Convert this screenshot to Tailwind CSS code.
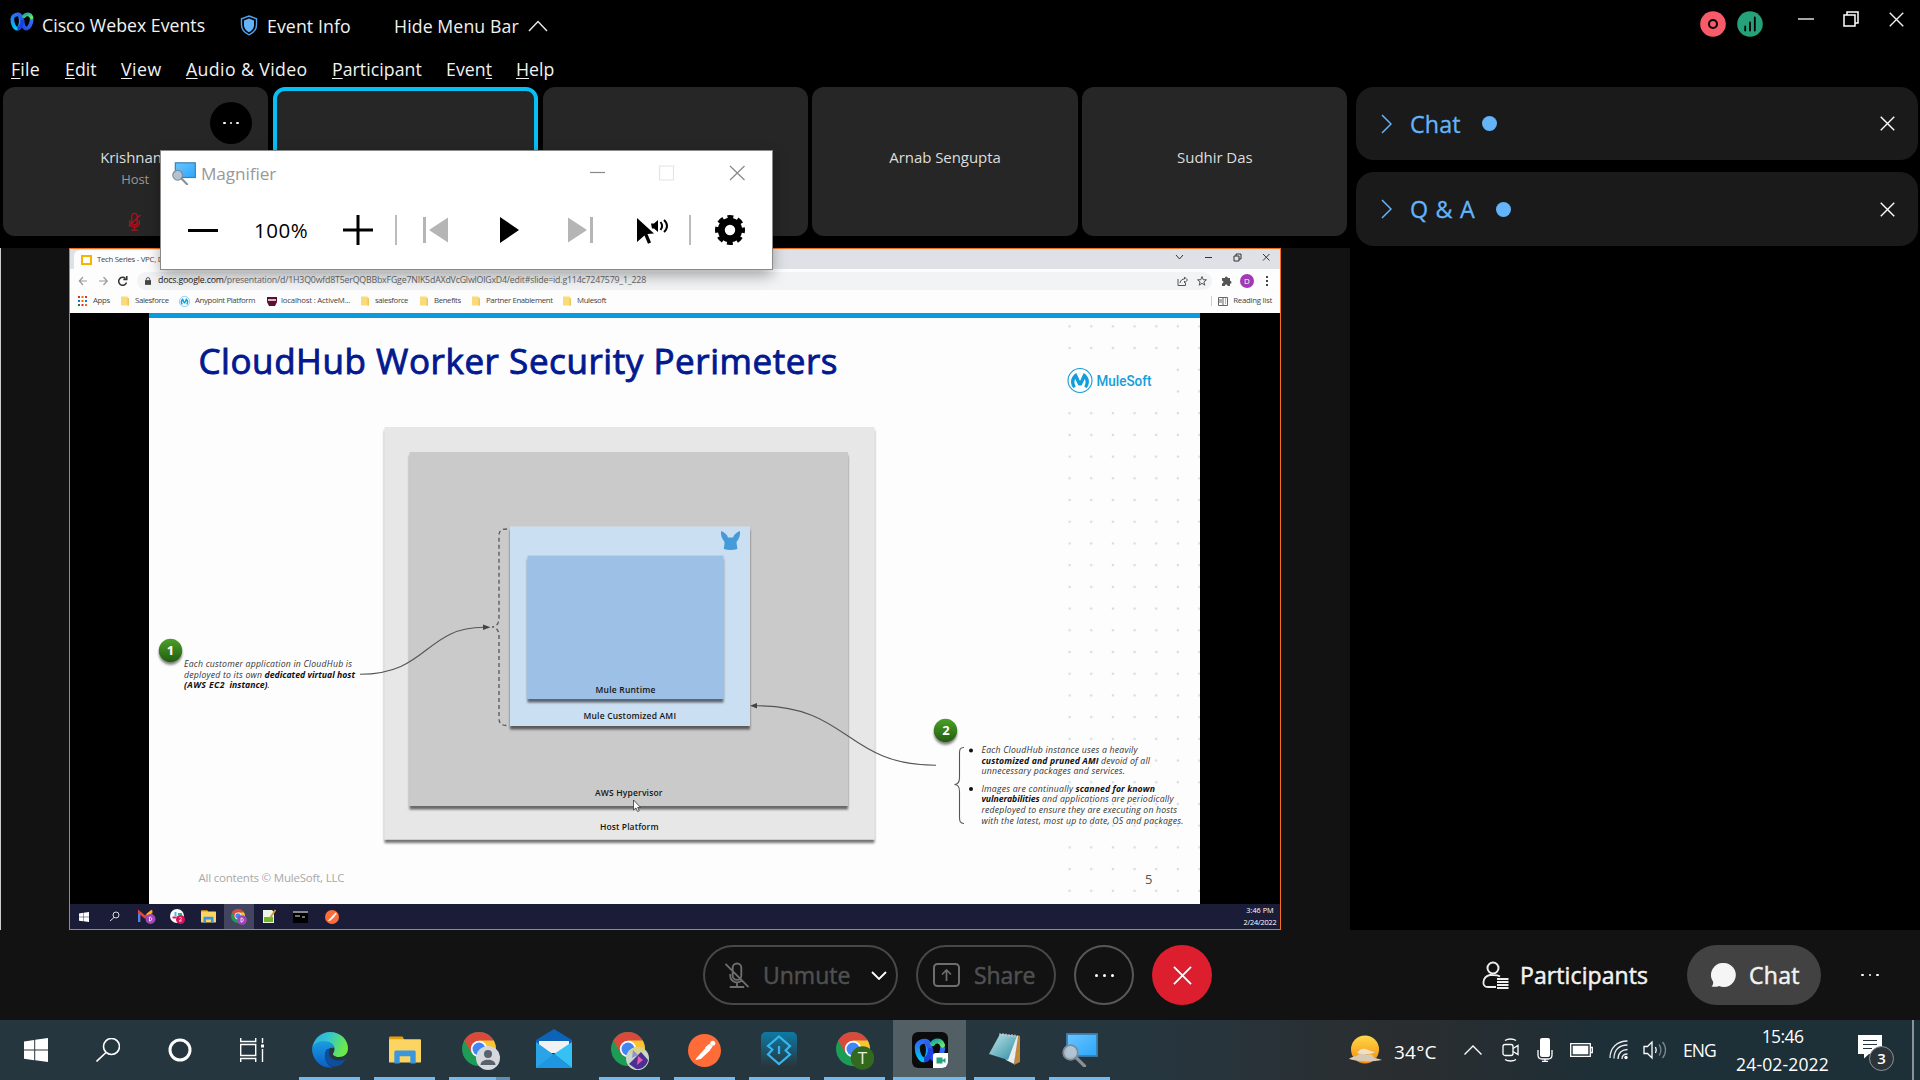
<!DOCTYPE html>
<html lang="en">
<head>
<meta charset="utf-8">
<title>Cisco Webex Events</title>
<script src="https://cdn.jsdelivr.net/npm/@tailwindcss/browser@4"></script>
</head>
<body class="w-[1920px] h-[1080px] overflow-hidden bg-black font-['Open_Sans',sans-serif] text-[#f2f2f2] whitespace-nowrap">
<svg class="absolute size-0">
  <defs>
    <linearGradient id="wbA" x1="0" y1="0" x2="0" y2="1"><stop offset="0" stop-color="#2a6af5"/><stop offset="1" stop-color="#08c4f0"/></linearGradient>
    <linearGradient id="wbB" x1="0" y1="1" x2="1" y2="0"><stop offset="0" stop-color="#1c3fe0"/><stop offset="1" stop-color="#3b7bff"/></linearGradient>
    <linearGradient id="wbC" x1="0" y1="0" x2="1" y2="1"><stop offset="0" stop-color="#1fa5a0"/><stop offset="1" stop-color="#66e86a"/></linearGradient>
    <linearGradient id="screen" x1="0" y1="0" x2="1" y2="1"><stop offset="0" stop-color="#6cc4ff"/><stop offset="1" stop-color="#2ba6fb"/></linearGradient>
    <linearGradient id="green" x1="0" y1="0" x2="0" y2="1"><stop offset="0" stop-color="#4aa02a"/><stop offset="1" stop-color="#235c10"/></linearGradient>
    <linearGradient id="edgeA" x1="0" y1="0" x2="1" y2="0.3"><stop offset="0" stop-color="#2aa9ea"/><stop offset=".5" stop-color="#35c7c8"/><stop offset="1" stop-color="#6be84c"/></linearGradient>
    <linearGradient id="edgeB" x1="0" y1="0" x2="0" y2="1"><stop offset="0" stop-color="#1b9de2"/><stop offset="1" stop-color="#0a5fc4"/></linearGradient>
    <linearGradient id="sun" x1="0" y1="0" x2="0" y2="1"><stop offset="0" stop-color="#ffd94a"/><stop offset="1" stop-color="#f78a0a"/></linearGradient>
    <linearGradient id="tile" x1="0" y1="0" x2="0" y2="1"><stop offset="0" stop-color="#0d7aa5"/><stop offset="1" stop-color="#2b3238"/></linearGradient>
    <linearGradient id="note" x1="0" y1="0" x2="1" y2="1"><stop offset="0" stop-color="#bfe4ea"/><stop offset="1" stop-color="#2f8fa3"/></linearGradient>
    <pattern id="dots" x="1058.8" y="315.5" width="21.65" height="21.71" patternUnits="userSpaceOnUse"><circle cx="10.8" cy="10.8" r="1.3" fill="#d3dde8"/></pattern>
    <filter id="drop" x="-5%" y="-5%" width="110%" height="115%"><feDropShadow dx="0" dy="3.5" stdDeviation="1" flood-color="#000" flood-opacity=".55"/></filter>
    <filter id="dropRound" x="-20%" y="-20%" width="140%" height="160%"><feDropShadow dx="0" dy="2.5" stdDeviation="1.3" flood-color="#000" flood-opacity=".5"/></filter>
    <symbol id="webex" viewBox="0 0 24 19">
      <path d="M2.300 7c0 5 2.200 9.600 5 9.600 2.600 0 3.500-4.600 3.500-7.600S9.800 2.400 7.600 2.400 2.300 4 2.300 7z" fill="none" stroke="url(#wbA)" stroke-width="3.800"/>
      <path d="M8 2.400c3 0 3.700 3 4.300 6.600.7 4 1.400 7.500 4 7.500 2.900 0 5.200-5 5.400-9.500" fill="none" stroke="url(#wbB)" stroke-width="3.800"/>
      <path d="M7.500 16.500c3.500 0 4.500-4 5.300-8.500" fill="none" stroke="#1c3fe0" stroke-width="3.800"/>
      <path d="M14 4.200c2-2.800 6.300-2.600 7.500 1.300" fill="none" stroke="url(#wbC)" stroke-width="3.800" stroke-linecap="round"/>
    </symbol>
    <symbol id="magnify" viewBox="0 0 36 34">
      <rect x="5" y="1" width="30" height="22" fill="url(#screen)" stroke="#3c7fb0" stroke-width="1.800"/>
      <path d="M14.500 25l8 8" stroke="#8b9096" stroke-width="3.200" stroke-linecap="round"/>
      <circle cx="8.500" cy="19.500" r="7.300" fill="#b9c6d3" fill-opacity=".92" stroke="#7e8a96" stroke-width="1.800"/>
    </symbol>
    <symbol id="chrome" viewBox="0 0 34 34">
      <circle cx="17" cy="17" r="17" fill="#1d9c56"/>
      <path d="M17 17L2.300 8.500A17 17 0 0 1 31.700 8.500z" fill="#d94a3c"/>
      <path d="M17 8.500h14.700A17 17 0 0 1 17 34l7.400-12.700z" fill="#fbc431"/>
      <path d="M2.300 8.500L9.700 21.300 17 8.500z" fill="#d94a3c"/>
      <circle cx="17" cy="17" r="8.200" fill="#fff"/><circle cx="17" cy="17" r="6.500" fill="#4285f4"/>
    </symbol>
    <symbol id="explorer" viewBox="0 0 33 28">
      <path d="M0 1.500C0 .6.600 0 1.500 0H14l2 4H0z" fill="#e3a008"/>
      <rect y="3" width="33" height="24" rx="1" fill="#fcd462"/>
      <path d="M5.500 28V16c0-1 .8-1.600 1.600-1.600h18.800c1 0 1.600.6 1.600 1.600v12h-5.500v-7.500H11V28z" fill="#3a96dd"/>
    </symbol>
    <symbol id="postman" viewBox="0 0 34 34">
      <circle cx="17" cy="17" r="17" fill="#ff6c37"/>
      <path d="M7.500 27l1.500-2.500L18.500 14l4 3-9 8.500z" fill="#fff"/><path d="M17.500 14l4.500-4 3.500 2.500-3.500 5z" fill="#fff"/><circle cx="25.500" cy="9.500" r="2.600" fill="#fff"/>
    </symbol>
    <symbol id="mic" viewBox="0 0 26 28">
      <path d="M9 6.500a4.500 4.500 0 0 1 9 0v8a4.500 4.500 0 0 1-9 0zM6.500 13v1.500a7 7 0 0 0 12 5M13.500 21.500V26M6 26.500h15M1.500 2.500l24 24" fill="none" stroke="currentColor" stroke-width="1.900"/>
    </symbol>
    <symbol id="micm" viewBox="0 0 18 28">
      <path d="M5 6a4 4 0 0 1 8 0v9a4 4 0 0 1-8 0zM2 12v4c0 4 3 6 7 6s7-2 7-6v-4M9 22v4.500M4 26.800h10M17.500 4.500L.5 21" fill="none" stroke="currentColor" stroke-width="1.900"/>
    </symbol>
    <symbol id="x" viewBox="0 0 16 16"><path d="M.8.800l14.400 14.400M15.200.8L.8 15.200" stroke="currentColor" stroke-width="1.500" fill="none"/></symbol>
    <symbol id="win" viewBox="0 0 24 24"><path d="M0 3.400l10.200-1.500v9.600H0zM11.200 1.800L24 0v11.500H11.200zM0 12.500h10.200v9.700L0 20.700zM11.200 12.500H24V24l-12.800-1.800z" fill="#fff"/></symbol>
    <symbol id="folder" viewBox="0 0 8 10"><path d="M0 .5h6.500v2H8V9.500H0z" fill="#fadb78"/><path d="M6.500 1v8.500H8v-7z" fill="#eec55a"/></symbol>
    <symbol id="mule" viewBox="0 0 26 26"><circle cx="13" cy="13" r="12" fill="none" stroke="#139ddb" stroke-width="1.100"/><path d="M6.500 20.800C2 15.500 4 8.500 9.300 5.500L13 13.500l3.700-8C22 8.500 24 15.500 19.500 20.800l-2.300-2c1.700-2.500 1.800-5 .6-7.300l-3.200 6.500h-3.200L8.200 11.500c-1.200 2.300-1.100 4.800.6 7.300z" fill="#139ddb"/></symbol>
  </defs>
</svg>

<!-- Title bar -->
<header class="flex h-[51px] items-center text-[17.7px] tracking-[0.02px]">
  <svg class="ml-[10px] -mt-[9px] h-[19px] w-6 shrink-0"><use href="#webex"/></svg>
  <span class="ml-2 w-[198px]">Cisco Webex Events</span>
  <svg class="h-[21px] w-[18px] shrink-0" viewBox="0 0 18 21"><path d="M9 1l7.500 2.800v6c0 4.500-3 8-7.500 10-4.500-2-7.500-5.500-7.500-10v-6z" fill="none" stroke="#4da3ee" stroke-width="1.400"/><path d="M9 3.600l5 1.900v4.800c0 3-2 5.500-5 7-3-1.500-5-4-5-7V5.500z" fill="#64b4fa"/></svg>
  <span class="ml-[9px] w-[127px] pt-0.5 tracking-[0.1px]">Event Info</span>
  <span class="w-[134px] pt-0.5 tracking-[0.1px]">Hide Menu Bar</span>
  <svg class="h-3 w-5" viewBox="0 0 20 12" fill="none" stroke="#e8e8e8" stroke-width="1.500"><path d="M1 11l9-9.500L19 11"/></svg>
  <div class="-mt-[4px] ml-auto flex items-center pr-4">
    <svg class="h-[26px] w-[26px]" viewBox="0 0 26 26"><circle cx="13" cy="13" r="12.800" fill="#f75a68"/><circle cx="13" cy="13" r="4" fill="none" stroke="#000" stroke-width="2"/></svg>
    <svg class="ml-[11px] h-[26px] w-[26px]" viewBox="0 0 26 26"><circle cx="13" cy="13" r="12.800" fill="#26a27b"/><path d="M8.200 15.500v4M13 11.500v8M17.800 6.500v13" stroke="#000" stroke-width="1.800" stroke-linecap="round"/></svg>
    <svg class="-mt-[9px] ml-[35px] h-4 w-4" viewBox="0 0 16 16"><path d="M0 8h16" stroke="#ddd" stroke-width="1.500"/></svg>
    <svg class="-mt-[9px] ml-[29px] h-4 w-4" viewBox="0 0 16 16" fill="none" stroke="#fff" stroke-width="1.500"><path d="M1 4h11v11H1zM4 4V1h11v11h-3"/></svg>
    <svg class="-mt-[9px] ml-[30px] h-[15px] w-[15px]"><use href="#x"/></svg>
  </div>
</header>

<!-- Menu bar -->
<nav class="flex h-9 items-center pl-[11px] text-[17.7px] tracking-[0.05px] underline-offset-2">
  <span class="w-[54px] tracking-[0.2px]"><u>F</u>ile</span>
  <span class="w-14"><u>E</u>dit</span>
  <span class="w-[65px] tracking-[0.5px]"><u>V</u>iew</span>
  <span class="w-[146px] tracking-[0.4px]"><u>A</u>udio &amp; Video</span>
  <span class="w-[114px]"><u>P</u>articipant</span>
  <span class="w-[70px]">Even<u>t</u></span>
  <span><u>H</u>elp</span>
</nav>

<main class="flex h-[843px]">
  <section class="w-[1350px] shrink-0">
    <!-- Video strip -->
    <div class="flex h-[161px] gap-[4.500px] pl-[3px] text-[15px] tracking-[-0.05px] text-[#ddd]">
      <div class="relative flex h-[149px] w-[265.300px] flex-col items-center rounded-[12px] bg-[#262626] pt-[56px]">
        <span class="w-[71px] leading-7">Krishnan</span>
        <span class="-ml-px text-[13px] leading-4 text-[#999]">Host</span>
        <svg class="-ml-[3px] mt-[25px] h-[19px] w-[13px] text-[#b3101c]"><use href="#micm"/></svg>
        <span class="absolute left-[207px] top-[15px] flex size-[42px] items-center justify-center gap-[4px] rounded-full bg-black"><i class="size-[2.500px] rounded-full bg-white"></i><i class="size-[2.500px] rounded-full bg-white"></i><i class="size-[2.500px] rounded-full bg-white"></i></span>
      </div>
      <div class="h-[149px] w-[265.300px] rounded-[12px] border-[4px] border-[#07bff5] bg-[#262626]"></div>
      <div class="h-[149px] w-[265.300px] rounded-[12px] bg-[#262626]"></div>
      <div class="flex h-[149px] w-[265.300px] items-center justify-center rounded-[12px] bg-[#262626] pb-[8px]">Arnab Sengupta</div>
      <div class="flex h-[149px] w-[265.300px] items-center justify-center rounded-[12px] bg-[#262626] pb-[8px]">Sudhir Das</div>
    </div>

    <!-- Shared screen -->
    <div class="flex h-[682px] border-l border-[#ccc] bg-[#121212] pl-[68px]">
      <div class="flex h-[682px] w-[1212px] flex-col border border-[#f26c22] bg-black text-[7.800px] text-[#444]">
        <div class="flex h-5 items-center bg-[#dee1e6]">
          <div class="ml-1 mt-px flex h-[19px] w-[220px] items-center rounded-t-md bg-[#fdfdfd] pl-[7px]"><svg class="h-[10px] w-[11px]" viewBox="0 0 11 10"><rect x="1" y="1" width="9" height="8" fill="none" stroke="#f4b400" stroke-width="2"/></svg><span class="ml-[5px] tracking-[-0.280px]">Tech Series - VPC, D</span></div>
          <svg class="ml-auto mr-[9px] h-3 w-[100px] -mt-1" viewBox="0 0 100 12" fill="none" stroke="#333"><path d="M5 4l3.500 4L12 4M34 6.500h7M63 5h5v5h-5zM65 5V3h5v5h-2M92 3l6.500 6.500M98.500 3L92 9.500"/></svg>
        </div>
        <div class="flex h-[23px] items-center bg-[#fdfdfd]">
          <svg class="ml-2 h-3 w-[52px] shrink-0" viewBox="0 0 52 12" fill="none" stroke="#999" stroke-width="1.200"><path d="M9 6H1.500M5 2L1.300 6 5 10M21 6h8M25.500 2L29.200 6l-3.700 4"/><path d="M47.500 3.500a4 4 0 1 0 1 4M48.800 1v3.500h-3.500" stroke="#333" stroke-width="1.500"/></svg>
          <div class="ml-[7px] flex h-[18px] w-[1075px] items-center rounded-full bg-[#f1f3f4] pl-2 text-[8.800px] text-[#666]"><svg class="h-[8px] w-[6px]" viewBox="0 0 7 9"><rect y="3.500" width="7" height="5.500" fill="#444"/><path d="M1.500 4V2.500a2 2 0 0 1 4 0V4" fill="none" stroke="#444"/></svg><span class="ml-[7px] tracking-[-0.195px]"><b class="font-normal text-[#222]">docs.google.com</b>/presentation/d/1H3Q0wfd8T5erQQBBbxFGge7NIK5dAXdVcGlwlOlGxD4/edit#slide=id.g114c7247579_1_228</span>
            <svg class="ml-auto mr-1 h-3 w-[32px]" viewBox="0 0 32 12" fill="none" stroke="#555"><path d="M2 4v6.500h7.500V8M4 8c.5-3 2.500-4 4.500-4V2l3 3-3 3V6"/><path d="M26 1.500l1.200 3.200 3.300.1-2.600 2.100.9 3.300-2.800-1.900-2.800 1.900.9-3.300-2.600-2.100 3.300-.1z"/></svg>
          </div>
          <svg class="ml-[9px] h-3 w-[11px]" viewBox="0 0 11 12"><path d="M1 3h2.800a1.500 1.500 0 1 1 3 0H9v2.800a1.500 1.500 0 1 1 0 3V11H6.600a1.400 1.400 0 0 0-2.800 0H1V8.500a1.400 1.400 0 0 0 0-2.800z" fill="#555"/></svg>
          <span class="ml-2 flex size-[14px] items-center justify-center rounded-full bg-[#a23bb3] text-[8px] text-white">D</span>
          <svg class="ml-[11px] h-3 w-1" viewBox="0 0 4 12"><path d="M1 1h2v2H1zM1 5h2v2H1zM1 9h2v2H1z" fill="#444"/></svg>
        </div>
        <div class="flex h-[21px] items-center bg-[#fdfdfd] pb-[3px] tracking-[-0.360px]">
          <svg class="ml-2 h-[10px] w-[9px]" viewBox="0 0 9 10"><path d="M0 0h2v2H0zM7 0h2v2H7zM3.500 8h2v2h-2z" fill="#d93025"/><path d="M3.500 0h2v2h-2zM3.500 4h2v2h-2zM7 8h2v2H7z" fill="#e8710a"/><path d="M0 4h2v2H0zM7 4h2v2H7z" fill="#1a73e8"/><path d="M0 8h2v2H0z" fill="#188038"/></svg>
          <span class="ml-[6px] w-[28px]">Apps</span>
          <svg class="h-[10px] w-2"><use href="#folder"/></svg><span class="ml-[6px] w-[44px]">Salesforce</span>
          <svg class="size-[11px]"><use href="#mule"/></svg><span class="ml-[5px] w-[72px]">Anypoint Platform</span>
          <svg class="h-[9px] w-[10px]" viewBox="0 0 10 9"><path d="M0 0h10v5L8 9H2L0 5z" fill="#5a1030"/><path d="M1 2h8v2H1z" fill="#d8b8c8"/></svg><span class="ml-1 w-[80px] tracking-[-0.200px]">localhost : ActiveM...</span>
          <svg class="h-[10px] w-2"><use href="#folder"/></svg><span class="ml-[6px] w-[45px]">salesforce</span>
          <svg class="h-[10px] w-2"><use href="#folder"/></svg><span class="ml-[6px] w-[38px]">Benefits</span>
          <svg class="h-[10px] w-2"><use href="#folder"/></svg><span class="ml-[6px] w-[77px]">Partner Enablement</span>
          <svg class="h-[10px] w-2"><use href="#folder"/></svg><span class="ml-[6px]">Mulesoft</span>
          <span class="ml-auto mr-[6px] h-[10px] w-px bg-[#ccc]"></span>
          <svg class="h-[9px] w-[10px]" viewBox="0 0 10 9"><path d="M.5.500h9v8h-9zM5 .5v8M1 3h3M1 5h3M7 2h1M7 4h1M7 6h1" fill="none" stroke="#666"/></svg>
          <span class="ml-[5px] mr-2 tracking-[-0.250px]">Reading list</span>
        </div>

        <!-- Slide -->
        <svg class="ml-[79px] h-[591px] w-[1051px] font-['Open_Sans',sans-serif]" viewBox="149 313 1051 591">
          <rect x="149" y="313" width="1051" height="591" fill="#fdfdfe"/>
          <rect x="1060" y="318" width="140" height="580" fill="url(#dots)"/>
          <rect x="1060" y="360" width="108" height="42" fill="#fdfdfe"/>
          <rect x="149" y="313" width="1051" height="5" fill="#0a9bdc"/>
          <text x="198.500" y="373.500" font-size="35" fill="#03198f" stroke="#03198f" stroke-width=".9" textLength="639">CloudHub Worker Security Perimeters</text>
          <use href="#mule" x="1067" y="367.500" width="26" height="26"/>
          <text x="1096.500" y="386" font-size="14" font-family="Roboto" font-weight="500" fill="#139ddb" textLength="55" lengthAdjust="spacingAndGlyphs">MuleSoft</text>
          <rect x="384.500" y="427" width="490" height="412.500" fill="#e7e7e7" filter="url(#drop)"/>
          <rect x="409.500" y="452" width="438.500" height="354" fill="#cacaca" filter="url(#drop)"/>
          <rect x="510" y="526.500" width="240" height="199.500" fill="#cbdff2" filter="url(#drop)"/>
          <rect x="527.500" y="555.500" width="196" height="143.500" fill="#9dc1e6" filter="url(#drop)"/>
          <path d="M721 531c3 1 6 3.500 7 6.500h5c1-3 4-5.500 7-6.500.5 4-1 8-3.500 11 0 3 1 5 .8 7-4 1.300-9.500 1.300-13.500 0 0-2 .9-4 .7-7-2.500-3-4-7-3.500-11z" fill="#459ad8"/>
          <g font-size="8.500" font-weight="600" fill="#151515">
            <text x="595.500" y="692.800" textLength="60">Mule Runtime</text>
            <text x="583.500" y="719.300" textLength="92.500">Mule Customized AMI</text>
            <text x="595" y="796" textLength="67.500">AWS Hypervisor</text>
            <text x="600" y="829.500" textLength="58.500">Host Platform</text>
          </g>
          <g fill="none" stroke="#555" stroke-width="1.100">
            <path d="M507 529c-6 0-8 2-8 7v82c0 6-3 9-7 9 4 0 7 3 7 9v82c0 5 2 7.500 8 7.500" stroke-dasharray="4 3" stroke-width="1.300"/>
            <path d="M360 674.300C428 674.300 425 627.300 484 627.300"/>
            <path d="M936 765.200C845 765.200 850 705.800 757 705.800"/>
            <path d="M964 747.500c-4 0-4.500 2-4.500 6v24c0 5-2 7-5 7 3 0 5 2 5 7v25.500c0 4 .5 6.500 4.500 6.500"/>
          </g>
          <path d="M483 624.500l7.500 2.800-7.500 2.800zM757 703l-7 2.800 7 2.800z" fill="#444"/>
          <circle cx="170.500" cy="650.500" r="11.700" fill="url(#green)" filter="url(#dropRound)"/><circle cx="945.500" cy="730.500" r="11.700" fill="url(#green)" filter="url(#dropRound)"/>
          <g fill="#fff" font-size="13" font-weight="700" text-anchor="middle"><text x="170.500" y="655.200">1</text><text x="946" y="735.200">2</text></g>
          <g font-size="8.700" font-style="italic" fill="#333">
            <text x="184" y="666.700" textLength="168">Each customer application in CloudHub is</text>
            <text x="184" y="677.600" textLength="78">deployed to its own</text><text x="264.500" y="677.600" font-weight="700" fill="#111" textLength="90.500">dedicated virtual host</text>
            <text x="184" y="688.300" font-weight="700" fill="#111" textLength="40.500">(AWS EC2</text><text x="229.500" y="688.300" font-weight="700" fill="#111" textLength="38">instance)</text><text x="267.500" y="688.300">.</text>
            <text x="981.500" y="753" textLength="156">Each CloudHub instance uses a heavily</text>
            <text x="981.500" y="763.600" font-weight="700" fill="#111" textLength="117">customized and pruned AMI</text><text x="1101" y="763.600" textLength="49">devoid of all</text>
            <text x="981.500" y="774.300" textLength="143.500">unnecessary packages and services.</text>
            <text x="981.500" y="791.500" textLength="91.500">Images are continually</text><text x="1075.500" y="791.500" font-weight="700" fill="#111" textLength="79.500">scanned for known</text>
            <text x="981.500" y="802.200" font-weight="700" fill="#111" textLength="58">vulnerabilities</text><text x="1042" y="802.200" textLength="131.500">and applications are periodically</text>
            <text x="981.500" y="813" textLength="195.500">redeployed to ensure they are executing on hosts</text>
            <text x="981.500" y="823.600" textLength="202">with the latest, most up to date, OS and packages.</text>
          </g>
          <circle cx="971" cy="750.500" r="2" fill="#111"/><circle cx="971" cy="789" r="2" fill="#111"/>
          <text x="198.500" y="882" font-size="11.500" fill="#a8a8a8" textLength="146">All contents © MuleSoft, LLC</text>
          <text x="1145" y="884" font-size="13" fill="#555">5</text>
          <path d="M633.500 800v10l2.400-2 1.800 3.500 1.600-.8-1.700-3.300h2.900z" fill="#fff" stroke="#333" stroke-width=".8"/>
        </svg>

        <!-- Presenter taskbar -->
        <div class="flex h-[25px] items-center bg-[#1b1d38] text-[7.300px] text-white">
          <svg class="ml-[9px] size-[10px]"><use href="#win"/></svg>
          <svg class="ml-5 size-[11px]" viewBox="0 0 11 11" fill="none" stroke="#ddd"><circle cx="7" cy="4" r="3"/><path d="M5 6.500L1 10"/></svg>
          <svg class="ml-[18px] h-[15px] w-[18px]" viewBox="0 0 18 15"><path d="M1 13V3l6 5 6-5v10" fill="none" stroke="#ea4335" stroke-width="2.500"/><path d="M1 13V5" stroke="#4285f4" stroke-width="2.500"/><path d="M14 2l-5 4" stroke="#fbbc04" stroke-width="2.500"/><circle cx="12.500" cy="10" r="5" fill="#a046b8"/><path d="M11.500 8v4c3 0 3-4 0-4z" fill="none" stroke="#fff" stroke-width=".8"/></svg>
          <svg class="ml-[14px] size-[15px]" viewBox="0 0 15 15"><circle cx="7" cy="7" r="7" fill="#fff"/><path d="M5.500 3v4" stroke="#36c5f0" stroke-width="2"/><path d="M8 5h4" stroke="#2eb67d" stroke-width="2"/><path d="M2.500 8.500h4" stroke="#e01e5a" stroke-width="2"/><circle cx="10.500" cy="10.500" r="4.500" fill="#d4145a"/><path d="M9.300 9c1-1.500 3 0 1.700 1.500L9.300 12h2.500" fill="none" stroke="#fff" stroke-width=".8"/></svg>
          <svg class="ml-[16px] h-[13px] w-[15px]"><use href="#explorer"/></svg>
          <span class="ml-[8px] flex h-[25px] w-[30px] items-center justify-center bg-[#434560]"><svg class="size-4" viewBox="0 0 16 16"><use href="#chrome" width="14" height="14"/><circle cx="11" cy="11" r="4.800" fill="#a046b8"/><path d="M10 9v4c3 0 3-4 0-4z" fill="none" stroke="#fff" stroke-width=".8"/></svg></span>
          <svg class="ml-[8px] h-[15px] w-[14px]" viewBox="0 0 14 15"><path d="M1 1h9l2 2v11H1z" fill="#eef4e4"/><path d="M2 8h9v5H2z" fill="#6cb52d"/><path d="M13.500 1L8 9" stroke="#c9a12c" stroke-width="1.800"/></svg>
          <svg class="ml-[17px] h-3 w-[15px]" viewBox="0 0 15 12"><rect width="15" height="12" fill="#000"/><path d="M0 0h15v2H0z" fill="#888"/><path d="M2 5h5M9 6h3" stroke="#ddd"/></svg>
          <svg class="ml-[17px] size-[14px]"><use href="#postman"/></svg>
          <div class="ml-auto mr-[3px] flex w-[34px] flex-col items-center leading-[11.500px]"><span>3:46 PM</span><span class="tracking-[-0.200px]">2/24/2022</span></div>
        </div>
      </div>
    </div>
  </section>

  <!-- Side panels -->
  <aside class="flex flex-col gap-3 pl-[6px] text-[23.300px] tracking-[0.1px] text-[#64b4fa] [-webkit-text-stroke:0.3px]">
    <div class="flex h-[73px] w-[562px] items-center rounded-[18px] bg-[#1a1a1a] pl-[25px] pr-[23px]">
      <svg class="h-5 w-[11px]" viewBox="0 0 11 20" fill="none" stroke="#64b4fa" stroke-width="1.500"><path d="M1 1l9 9-9 9"/></svg>
      <span class="ml-[18px] mt-px w-[52px]">Chat</span>
      <span class="ml-[20px] size-[15px] rounded-full bg-[#64b4fa]"></span>
      <svg class="ml-auto size-[15px] text-white"><use href="#x"/></svg>
    </div>
    <div class="flex h-[74px] w-[562px] items-center rounded-[18px] bg-[#1a1a1a] pl-[25px] pr-[23px]">
      <svg class="h-5 w-[11px]" viewBox="0 0 11 20" fill="none" stroke="#64b4fa" stroke-width="1.500"><path d="M1 1l9 9-9 9"/></svg>
      <span class="ml-[18px] mt-px w-[66px] tracking-[0.700px]">Q &amp; A</span>
      <span class="ml-[20px] size-[15px] rounded-full bg-[#64b4fa]"></span>
      <svg class="ml-auto size-[15px] text-white"><use href="#x"/></svg>
    </div>
  </aside>
</main>

<!-- Meeting controls -->
<footer class="flex h-[90px] items-center bg-[#121212] text-[23px] [-webkit-text-stroke:0.500px]">
  <div class="ml-[703px] flex h-[60px] w-[195px] items-center rounded-full border-2 border-[#484848] pl-[19px] text-[#505050]">
    <svg class="h-7 w-[25px] shrink-0 text-[#6e6e6e]"><use href="#mic"/></svg>
    <span class="ml-[14px] mt-px w-[88px]">Unmute</span>
    <svg class="ml-[20px] h-[9px] w-4 shrink-0" viewBox="0 0 16 9" fill="none" stroke="#fff" stroke-width="1.800"><path d="M1 1l7 7 7-7"/></svg>
  </div>
  <div class="ml-[18px] flex h-[60px] w-[140px] items-center rounded-full border-2 border-[#484848] pl-[15px] text-[#505050]">
    <svg class="h-[24px] w-[27px] shrink-0" viewBox="0 0 27 24" fill="none" stroke="#6e6e6e" stroke-width="2"><rect x="1" y="1" width="25" height="22" rx="3.500"/><path d="M13.500 18V7M9 11.500L13.500 7l4.500 4.500" stroke-width="1.700"/></svg>
    <span class="ml-[14px] mt-px tracking-[-0.1px]">Share</span>
  </div>
  <div class="ml-[18px] flex size-[60px] items-center justify-center gap-[5px] rounded-full border-2 border-[#585858]"><i class="size-[3px] rounded-full bg-white"></i><i class="size-[3px] rounded-full bg-white"></i><i class="size-[3px] rounded-full bg-white"></i></div>
  <div class="ml-[18px] flex size-[60px] items-center justify-center rounded-full bg-[#dc1e2e]"><svg class="size-[19px] text-white"><use href="#x"/></svg></div>
  <svg class="ml-[270px] h-[28px] w-[27px]" viewBox="0 0 27 28" fill="none" stroke="#eee" stroke-width="2"><circle cx="11" cy="7" r="5.500"/><path d="M14 26H6c-3.500 0-5-2.500-4.500-5C2 17 5 14.500 8 14c3 .5 7-.5 10 1.500M15 18h11.500M15 21h11.500M15 24h11.500M15 27h11.500" stroke-width="1.800"/></svg>
  <span class="ml-[11px] mt-px w-[167px] tracking-[0.1px]">Participants</span>
  <div class="flex h-[60px] w-[134px] items-center rounded-full bg-[#424242] pl-6">
    <svg class="size-[25px]" viewBox="0 0 25 25"><path d="M13 0a12 12 0 1 1-5 23c-2 1-4.500 1-7.500.5 1.500-1.500 2-3 1.500-5A12 12 0 0 1 13 0z" fill="#f5f5f5"/></svg>
    <span class="ml-[13px] mt-px tracking-[0.300px]">Chat</span>
  </div>
  <div class="ml-10 flex gap-[5px]"><i class="size-[2.500px] rounded-full bg-white"></i><i class="size-[2.500px] rounded-full bg-white"></i><i class="size-[2.500px] rounded-full bg-white"></i></div>
</footer>

<!-- Taskbar -->
<div class="flex h-[60px] items-center bg-linear-to-r from-[#26363f] from-60% via-[#2a2d2f] via-73% to-[#1d2f37] to-84% text-white">
  <svg class="ml-6 size-6"><use href="#win"/></svg>
  <svg class="ml-12 size-6" viewBox="0 0 24 24" fill="none" stroke="#fff" stroke-width="1.600"><circle cx="15.500" cy="8.500" r="8"/><path d="M10 14.500L.5 23.500"/></svg>
  <svg class="ml-12 size-6" viewBox="0 0 24 24"><circle cx="12" cy="12" r="10" fill="none" stroke="#fff" stroke-width="3"/></svg>
  <svg class="ml-12 size-6" viewBox="0 0 24 24" fill="none" stroke="#fff" stroke-width="1.400"><path d="M.7 6.500h15v11H.7zM.7 0v3.500h15V0M.7 24v-3.500h15V24M22.500 0v5M22.500 11v13"/><path d="M21 6.500h3v3h-3z" fill="#fff" stroke="none"/></svg>
  <div class="ml-[35px] flex h-[60px] w-[61px] items-center justify-center border-b-[3px] border-[#76b9ed] pt-[3px]"><svg class="size-9" viewBox="0 0 36 36"><path d="M0 17C1 7 9 0 18 0c11 0 18 8 18 16 0 6-4 9-9 9-4 0-6-2-6-3 0-1 1.500-2 1.500-5 0-4-4-7-9-7C7 10 1 13 0 17z" fill="url(#edgeA)"/><path d="M0 17c1-5 6-8 12-8 7 0 10 4 10 7-3-1-9 1-9 8 0 6 4 11 9 11-12 3-22-7-22-18z" fill="url(#edgeB)"/><path d="M15 17c-4 4-3 17 8 17.500 4 .2 8-3 11-7.500-6 3-17 2-17-6 0-2 1-4-2-4z" fill="#0c4fa0"/></svg></div>
  <div class="ml-[14px] flex h-[60px] w-[61px] items-center justify-center border-b-[3px] border-[#76b9ed] pt-[3px]"><svg class="h-7 w-8"><use href="#explorer"/></svg></div>
  <div class="ml-[14px] flex h-[60px] w-[61px] flex-col justify-between">
    <svg class="ml-[13px] mt-[12px] size-[38px]" viewBox="0 0 38 38"><use href="#chrome" width="34" height="34"/><circle cx="26" cy="26" r="12" fill="#d5d8dd"/><circle cx="26" cy="22" r="4" fill="#59616d"/><path d="M18.500 33c0-7 15-7 15 0z" fill="#59616d"/></svg>
    <div class="flex h-[3px]"><span class="w-[47px] bg-[#76b9ed]"></span><span class="w-[14px] bg-[#5b8fb8]"></span></div>
  </div>
  <svg class="ml-[26px] h-[39px] w-9 -mt-1" viewBox="0 0 36 39"><path d="M0 11L18 0l18 11v4H0z" fill="#0c63b8"/><path d="M3 12h30v12H3z" fill="#f2f2f2"/><path d="M0 13l36 26H0z" fill="#29a4e6"/><path d="M36 13v26L18 25z" fill="#34c2f5"/><path d="M0 39l18-14 18 14z" fill="#1e96e0"/></svg>
  <div class="ml-[27px] flex h-[60px] w-[61px] items-center justify-center border-b-[3px] border-[#76b9ed] pt-[4px]"><svg class="size-[38px]" viewBox="0 0 38 38"><use href="#chrome" width="34" height="34"/><circle cx="26.500" cy="26.500" r="11.500" fill="#c9d6c8"/><path d="M17 20c5-6 12-7 17-1l-6 6z" fill="#d6d48e"/><path d="M18 32l12-12 7 8c-1 6-7 10-12 9z" fill="#4b2f93"/><path d="M27 24l5 4-6 5z" fill="#e85ab0"/><path d="M22 18l5 5-6 3z" fill="#8792d8"/></svg></div>
  <div class="ml-[14px] flex h-[60px] w-[61px] items-center justify-center border-b-[3px] border-[#76b9ed] pr-px pt-[3px]"><svg class="size-[33px]"><use href="#postman"/></svg></div>
  <div class="ml-[14px] flex h-[60px] w-[61px] items-center justify-center border-b-[3px] border-[#76b9ed] pr-px pt-[3px]"><svg class="size-9" viewBox="0 0 36 36"><rect width="36" height="36" rx="5" fill="url(#tile)"/><path d="M24 19l5-5L18 4.500 7 14l5 4M12 17l-5 5.500L18 32l11-9.500-5-4.500M18 14v8" fill="none" stroke="#37b6ee" stroke-width="2.200"/></svg></div>
  <div class="ml-[14px] flex h-[60px] w-[61px] items-center justify-center border-b-[3px] border-[#76b9ed] pt-[4px]"><svg class="size-[38px]" viewBox="0 0 38 38"><use href="#chrome" width="34" height="34"/><circle cx="26.500" cy="26" r="11.800" fill="#33691e"/><text x="26.500" y="32" font-size="17" fill="#e6f0e0" text-anchor="middle">T</text></svg></div>
  <div class="ml-2 flex h-[60px] w-[73px] items-center justify-center border-b-[3px] border-[#76b9ed] bg-[#526065] pt-[3px]"><svg class="size-9" viewBox="0 0 36 36"><rect width="36" height="36" rx="6" fill="#0b0b0b"/><use href="#webex" x="2" y="6" width="32" height="25"/><path d="M21 24a3 3 0 0 1 3-3h12v9a6 6 0 0 1-6 6h-9z" fill="#fff"/><path d="M24.500 25.500h6v6h-6zM30.500 28l3-2v5l-3-2z" fill="#23a27c"/></svg></div>
  <div class="ml-2 flex h-[60px] w-[61px] items-center justify-center border-b-[3px] border-[#76b9ed] pt-[1px]"><svg class="h-[34px] w-9" viewBox="0 0 36 34"><path d="M30 3l3 1v26l-6 3z" fill="#c08a3a"/><path d="M14 2l17 2-4 28-8-4z" fill="#e8eef0"/><path d="M13 2l17 2-9 24L2 22z" fill="url(#note)"/><path d="M13 1v3M16 1v3M19 1.500v3M22 2v3M25 2v3M28 2.500v3" stroke="#ccc"/></svg></div>
  <div class="ml-[14px] flex h-[60px] w-[61px] items-center justify-center border-b-[3px] border-[#76b9ed] pt-[3px]"><svg class="h-[34px] w-9"><use href="#magnify"/></svg></div>

  <div class="ml-auto flex h-[60px] items-center text-[17.500px]">
    <svg class="h-8 w-[35px]" viewBox="0 0 35 32"><circle cx="17" cy="15.500" r="14" fill="url(#sun)"/><path d="M1 25c3-3 7-2 9-4 3-4 8-2 9 0 4-2 6 0 7 3 3 0 5 1 8 2-9 2-24 2-33-1z" fill="#d8c9b4"/><path d="M9 19c2-4 6-5 9-4s4 2 9 3c-2 2-12 3-18 1z" fill="#efe0c4"/></svg>
    <span class="ml-[11px] mt-1 w-[70px] text-[19px] tracking-[0.200px]">34°C</span>
    <svg class="h-[10px] w-[18px]" viewBox="0 0 18 10" fill="none" stroke="#fff" stroke-width="1.400"><path d="M.5 9.500L9 1l8.500 8.500"/></svg>
    <svg class="ml-[20px] h-6 w-[17px]" viewBox="0 0 17 24" fill="none" stroke="#fff" stroke-width="1.300"><rect x="1" y="6.500" width="10" height="11" rx="2"/><path d="M11 10.500l5-3v9l-5-3M3 2.500c3-2 8-2 11 0M3 21.500c3 2 8 2 11 0"/></svg>
    <svg class="ml-[18px] h-6 w-4" viewBox="0 0 16 24"><rect x="3" width="10" height="19" rx="2" fill="#fff"/><path d="M1 12v5c0 3 2 4 4 4h6c2 0 4-1 4-4v-5M8 21v2.500M5 23.500h6" fill="none" stroke="#fff" stroke-width="1.300"/></svg>
    <svg class="ml-[17px] h-[14px] w-[23px]" viewBox="0 0 23 14"><path d="M.7.700h19.600v12.600H.7zM20.500 4.500H22.300v5h-1.800" fill="none" stroke="#fff" stroke-width="1.300"/><path d="M2.700 2.700h15.600v8.600H2.700z" fill="#fff"/></svg>
    <svg class="ml-4 h-5 w-5" viewBox="0 0 20 20" fill="none" stroke="#fff" stroke-width="1.300"><path d="M1 18C1 8 8 1 18.500 1M5 18.500C5 10 10 5 18.500 5M9 19c0-6 4-9.500 9.500-9.500M13 19c0-3 2-5 5.500-5" stroke-opacity=".9"/><circle cx="17" cy="17.500" r="1.700" fill="#fff" stroke="none"/></svg>
    <svg class="ml-[14px] h-5 w-6" viewBox="0 0 24 20" fill="none" stroke="#fff" stroke-width="1.300"><path d="M1 6.500v7h3.500L9 18V2L4.500 6.500z"/><path d="M12.500 7c1 2 1 4 0 6"/><path d="M16 4.500c2.500 3 2.500 8 0 11M19.500 2c4 4.500 4 11.500 0 16" stroke="#7c878c"/></svg>
    <span class="ml-4 w-[53px] tracking-[-0.900px]">ENG</span>
    <div class="flex w-[93px] flex-col items-center leading-[28px]"><span class="tracking-[-0.600px]">15:46</span><span class="tracking-[0.150px]">24-02-2022</span></div>
    <svg class="ml-[29px] mr-[18px] mt-1 h-[38px] w-9" viewBox="0 0 36 38"><path d="M0 2h24v19H11l-5 4.500V21H0z" fill="#fff"/><path d="M5 7.500h14M5 11.500h14M5 15.500h9" stroke="#26343b" stroke-width="1.200"/><circle cx="23.500" cy="25.500" r="12" fill="#2c3439" stroke="#8b9296"/><text x="23.500" y="31" font-size="15" font-weight="600" fill="#fff" text-anchor="middle">3</text></svg>
    <span class="mr-[6px] h-[60px] w-[2px] bg-[#8a9398]"></span>
  </div>
</div>

<!-- Magnifier window -->
<div class="absolute left-[161px] top-[151px] flex h-[118px] w-[611px] flex-col bg-white text-black shadow-[0_0_0_1px_#8a8a8a,0_6px_14px_rgba(0,0,0,.35)]">
  <div class="flex h-[44px] items-center pl-[11px] text-[17.200px] text-[#999]">
    <svg class="h-[23px] w-6"><use href="#magnify"/></svg>
    <span class="ml-[5px] w-[389px] pt-0.5 tracking-[-0.100px]">Magnifier</span>
    <svg class="h-4 w-[155px]" viewBox="0 0 155 16" fill="none" stroke="#888" stroke-width="1.200"><path d="M0 7.500h15"/><path d="M69.500 1h14v14h-14z" stroke="#e4e4e4"/><path d="M140 1l14.500 14M154.500 1L140 15"/></svg>
  </div>
  <div class="flex h-[70px] items-center text-[20.500px]">
    <span class="ml-[27px] h-[3px] w-[30px] bg-black"></span>
    <span class="ml-[36px] w-[89px] tracking-[0.500px]">100%</span>
    <svg class="size-[30px]" viewBox="0 0 30 30"><path d="M0 15h30M15 0v30" stroke="#000" stroke-width="3"/></svg>
    <span class="ml-[22px] h-[30px] w-[2px] bg-[#bbb]"></span>
    <svg class="ml-[26px] h-[26px] w-[26px]" viewBox="0 0 26 26" fill="#b5b5b5"><path d="M0 0h3v26H0zM25 .5v25L6 13z"/></svg>
    <svg class="ml-[51px] h-[26px] w-[19px]" viewBox="0 0 19 26"><path d="M0 0l19 13L0 26z"/></svg>
    <svg class="ml-[49px] h-[26px] w-[25px]" viewBox="0 0 25 26" fill="#b5b5b5"><path d="M22 0h3v26h-3zM0 .5v25L19 13z"/></svg>
    <svg class="ml-[44px] h-[28px] w-[32px]" viewBox="0 0 32 28"><path d="M0 2l17 15.500-6.500.5 3.500 8.500-3 1.300L7.500 19.500 0 26z"/><path d="M14 7.500h3L21 4v12l-4-3.500h-2z"/><path d="M23.500 6c2 2.500 2 5.500 0 8M27 4c4 3.500 4 8.500 0 12" fill="none" stroke="#000" stroke-width="2"/></svg>
    <span class="ml-[20px] h-[30px] w-[2px] bg-[#bbb]"></span>
    <svg class="ml-[24px] size-[30px]" viewBox="0 0 30 30"><circle cx="15" cy="15" r="8.700" fill="none" stroke="#000" stroke-width="7"/><circle cx="15" cy="15" r="13" fill="none" stroke="#000" stroke-width="4" stroke-dasharray="5.800 4.410" stroke-dashoffset="2.900"/></svg>
  </div>
</div>
</body>
</html>
